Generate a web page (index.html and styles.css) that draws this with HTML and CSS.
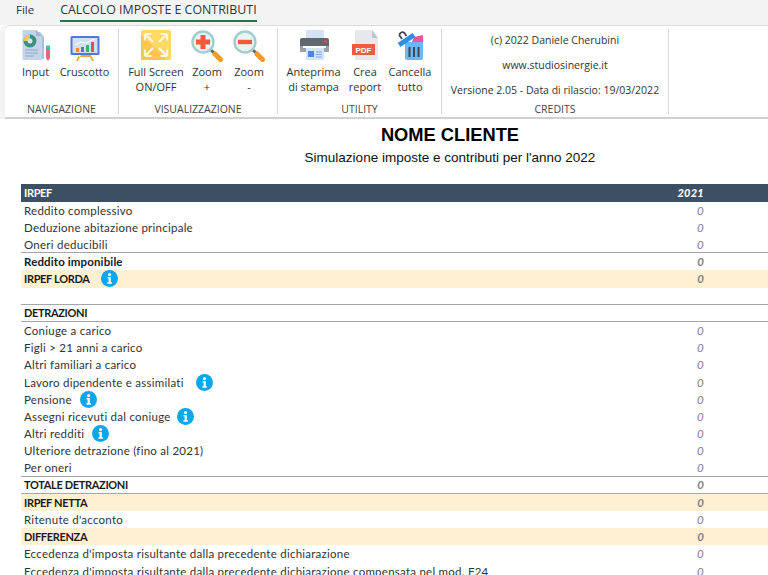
FILE: index.html
```html
<!DOCTYPE html>
<html lang="it">
<head>
<meta charset="utf-8">
<title>Calcolo imposte e contributi</title>
<link rel="stylesheet" href="styles.css">
</head>
<body>
<svg class="defs" width="0" height="0" aria-hidden="true">
  <symbol id="info" viewBox="0 0 17 17">
    <circle cx="8.5" cy="8.5" r="8.5" fill="#0ba6ee"/>
    <circle cx="8.5" cy="4.6" r="1.6" fill="#fff"/>
    <path d="M6.600 7h3.200v5.200h1.100v1.600H6.400v-1.600h1.200V8.600h-1z" fill="#fff"/>
  </symbol>
  <symbol id="lens" viewBox="0 0 32 32">
    <path d="M20 20l4 4" stroke="#5c6670" stroke-width="3"/>
    <path d="M24 24l5.500 5.500" stroke="#f39a2b" stroke-width="5" stroke-linecap="round"/>
    <circle cx="12" cy="12" r="10.500" fill="#e8f3f3" stroke="#a5cdd0" stroke-width="2.500"/>
  </symbol>
</svg>

<nav class="tabs">
  <span class="tab tab-file">File</span>
  <span class="tab tab-active">CALCOLO IMPOSTE E CONTRIBUTI</span>
</nav>

<section class="ribbon">
  <div class="group group-nav">
    <div class="buttons">
      <div class="btn btn-input">
        <svg class="icon" viewBox="0 0 30 32" width="30" height="32">
          <path d="M4 2h15l4 5v22H4z" fill="#aebfdc"/>
          <path d="M1.500 0H15l6 6v24H1.500z" fill="#c6d4ea"/>
          <path d="M15 0l6 6h-6z" fill="#a3b5d4"/>
          <circle cx="9" cy="11" r="6.500" fill="#3e8e80"/>
          <path d="M9 11V4.500A6.500 6.500 0 0 0 2.500 11z" fill="#f0c860"/>
          <circle cx="9" cy="11" r="2.500" fill="#d8e4ec"/>
          <path d="M4 20h13M4 23h13M4 26h9" stroke="#93a6c6" stroke-width="1"/>
          <path d="M25 19h4v9l-2 3-2-3z" fill="#e5697e"/>
          <path d="M25 15.500h4V19h-4z" fill="#47bdb9"/>
        </svg>
        <span>Input</span>
      </div>
      <div class="btn btn-crus">
        <svg class="icon" viewBox="0 0 30 32" width="30" height="32">
          <path d="M9 25h12v2H9zM9 25l-3 6h2l3-6zM21 25l3 6h-2l-3-6z" fill="#eda93a"/>
          <rect x="0.500" y="6" width="29" height="19" rx="1.500" fill="#4f78dc"/>
          <rect x="2.500" y="8" width="25" height="15" fill="#cfe0f2"/>
          <path d="M5 15l6-3 5 1 8-4" stroke="#fff" fill="none"/>
          <path d="M6 18h3v4H6z" fill="#ee8a3c"/>
          <path d="M11 17h3v5h-3z" fill="#4f78dc"/>
          <path d="M16 15h3v7h-3z" fill="#3fb06b"/>
          <path d="M21 12h3v10h-3z" fill="#e2504a"/>
        </svg>
        <span>Cruscotto</span>
      </div>
    </div>
    <div class="group-label">NAVIGAZIONE</div>
  </div>

  <div class="group group-view">
    <div class="buttons">
      <div class="btn btn-full">
        <svg class="icon" viewBox="0 0 30 32" width="30" height="32">
          <rect x="0" y="0" width="30" height="30" rx="1.500" fill="#ffd966"/>
          <path d="M0 30V4l26 26z" fill="#fdc550"/>
          <path d="M4 4l8 8M4 4h6.500M4 4v6.500M26 4l-8 8M26 4h-6.500M26 4v6.500M4 26l8-8M4 26h6.500M4 26v-6.500M26 26l-8-8M26 26h-6.500M26 26v-6.500" stroke="#fff6de" stroke-width="2.200" fill="none"/>
        </svg>
        <span>Full Screen<br>ON/OFF</span>
      </div>
      <div class="btn btn-zoomp">
        <svg class="icon" viewBox="0 0 32 32" width="32" height="32">
          <use href="#lens"/>
          <path d="M5 9.500h4.500V5h5v4.500H19v5h-4.500V19h-5v-4.500H5z" fill="#f4593b"/>
        </svg>
        <span>Zoom<br>+</span>
      </div>
      <div class="btn btn-zoomm">
        <svg class="icon" viewBox="0 0 32 32" width="32" height="32">
          <use href="#lens"/>
          <path d="M5 9.800h14v4.400H5z" fill="#f4593b"/>
        </svg>
        <span>Zoom<br>-</span>
      </div>
    </div>
    <div class="group-label">VISUALIZZAZIONE</div>
  </div>

  <div class="group group-util">
    <div class="buttons">
      <div class="btn btn-print">
        <svg class="icon" viewBox="0 0 32 32" width="32" height="32">
          <path d="M8 0h18v12H8z" fill="#d5e2f6"/>
          <path d="M2 10a2 2 0 0 1 2-2h25a2 2 0 0 1 2 2v6H2z" fill="#5f676f"/>
          <path d="M2 16h29v6H2z" fill="#9aa1a9"/>
          <path d="M5 16h23v2H5z" fill="#fff"/>
          <path d="M8 18h18v12H8z" fill="#d5e5f8"/>
          <path d="M10 21h6v6h-6z" fill="#4e86dc"/>
          <path d="M18 22h6M18 24.500h6M18 27h6" stroke="#7ea6e4" stroke-width="1"/>
          <rect x="26" y="10.500" width="3" height="2" fill="#e2504a"/>
        </svg>
        <span>Anteprima<br>di stampa</span>
      </div>
      <div class="btn btn-pdf">
        <svg class="icon" viewBox="0 0 32 32" width="32" height="32">
          <path d="M6 0h17l6 8v22H6z" fill="#e6e8ec"/>
          <path d="M23 0l6 8h-6z" fill="#bfc4cb"/>
          <rect x="3" y="14" width="23" height="11" rx="0.500" fill="#f25a48"/>
          <text x="14.500" y="22.700" class="pdf-text" text-anchor="middle">PDF</text>
        </svg>
        <span>Crea<br>report</span>
      </div>
      <div class="btn btn-trash">
        <svg class="icon" viewBox="0 0 32 32" width="32" height="32">
          <path d="M18 12l2-5 9-2v7z" fill="#f0568f"/>
          <path d="M11 12h18v16a2 2 0 0 1-2 2H13a2 2 0 0 1-2-2z" fill="#6cb8f5"/>
          <path d="M14.500 17h2v10h-2zM19 17h2v10h-2zM23.500 17h2v10h-2z" fill="#3c4652"/>
          <path d="M5 15L20 5" stroke="#2f8de4" stroke-width="5"/>
          <path d="M8 9L5.500 5.500a3 3 0 0 1 5-2.500l2 3" stroke="#3c4652" stroke-width="1.800" fill="none"/>
        </svg>
        <span>Cancella<br>tutto</span>
      </div>
    </div>
    <div class="group-label">UTILITY</div>
  </div>

  <div class="group group-credits">
    <div class="credits">
      <span>(c) 2022 Daniele Cherubini</span>
      <span>www.studiosinergie.it</span>
      <span>Versione 2.05 - Data di rilascio: 19/03/2022</span>
    </div>
    <div class="group-label">CREDITS</div>
  </div>
</section>

<main class="sheet">
  <h1 class="title">NOME CLIENTE</h1>
  <p class="subtitle">Simulazione imposte e contributi per l'anno 2022</p>

  <div class="table">
    <div class="row row-head"><span class="caps">IRPEF</span><b>2021</b></div>
    <div class="row"><span>Reddito complessivo</span><i>0</i></div>
    <div class="row"><span>Deduzione abitazione principale</span><i>0</i></div>
    <div class="row row-rule"><span>Oneri deducibili</span><i>0</i></div>
    <div class="row row-bold"><span>Reddito imponibile</span><i>0</i></div>
    <div class="row row-bold row-peach"><span class="caps">IRPEF LORDA</span><svg class="info gap-11" width="17" height="17"><use href="#info"/></svg><i>0</i></div>
    <div class="row row-rule"></div>
    <div class="row row-bold row-rule"><span class="caps">DETRAZIONI</span></div>
    <div class="row"><span>Coniuge a carico</span><i>0</i></div>
    <div class="row"><span>Figli &gt; 21 anni a carico</span><i>0</i></div>
    <div class="row"><span>Altri familiari a carico</span><i>0</i></div>
    <div class="row"><span>Lavoro dipendente e assimilati</span><svg class="info gap-12" width="17" height="17"><use href="#info"/></svg><i>0</i></div>
    <div class="row"><span>Pensione</span><svg class="info gap-8" width="17" height="17"><use href="#info"/></svg><i>0</i></div>
    <div class="row"><span>Assegni ricevuti dal coniuge</span><svg class="info gap-6" width="17" height="17"><use href="#info"/></svg><i>0</i></div>
    <div class="row"><span>Altri redditi</span><svg class="info gap-8" width="17" height="17"><use href="#info"/></svg><i>0</i></div>
    <div class="row"><span>Ulteriore detrazione (fino al 2021)</span><i>0</i></div>
    <div class="row row-rule"><span>Per oneri</span><i>0</i></div>
    <div class="row row-bold row-rule"><span class="caps">TOTALE DETRAZIONI</span><i>0</i></div>
    <div class="row row-bold row-peach"><span class="caps">IRPEF NETTA</span><i>0</i></div>
    <div class="row"><span>Ritenute d'acconto</span><i>0</i></div>
    <div class="row row-bold row-peach"><span class="caps">DIFFERENZA</span><i>0</i></div>
    <div class="row"><span>Eccedenza d'imposta risultante dalla precedente dichiarazione</span><i>0</i></div>
    <div class="row"><span>Eccedenza d'imposta risultante dalla precedente dichiarazione compensata nel mod. F24</span><i>0</i></div>
  </div>
</main>
</body>
</html>
```
FILE: styles.css
```css
* { box-sizing: border-box; }
html, body { margin: 0; height: 100%; overflow: hidden; background: #fff; }
body { width: 768px; height: 575px; font-family: "Open Sans", "Liberation Sans", sans-serif; color: #333; }
.defs { position: absolute; }

.tabs { height: 25px; background: #f3f3f3; display: flex; align-items: flex-start; padding: 2px 0 0 16px; gap: 26px; font-size: 12.4px; color: #333; }
.tab { line-height: 15px; padding-bottom: 3px; }
.tab-file { font-size: 11.5px; }
.tab-active { border-bottom: 2px solid #1f7a45; }

.ribbon { height: 94px; margin-left: 5px; background: #fff; border-radius: 6px 0 0 0; border-top: 1px solid #dcdcdc; border-bottom: 2px solid #d0d0d0; display: flex; padding-top: 3px; box-shadow: -5px 0 0 #f3f3f3; }
.group { display: flex; flex-direction: column; border-right: 1px solid #d8d8d8; height: 85px; }
.group-nav { width: 114px; }
.group-view { width: 159px; }
.group-util { width: 164px; }
.group-credits { width: 227px; }
.buttons { flex: 1; display: flex; padding-top: 1px; }
.btn { display: flex; flex-direction: column; align-items: center; text-align: center; font-size: 11px; line-height: 15px; color: #333; }
.btn .icon { height: 32px; margin-bottom: 2px; flex: none; }
.btn-input { width: 49px; margin-left: 6px; }
.btn-crus { width: 49px; }
.btn-full { width: 72px; margin-left: 1px; }
.btn-zoomp { width: 30px; }
.btn-zoomm { width: 30px; margin-left: 12px; }
.btn-print { width: 71px; }
.btn-pdf { width: 32px; }
.btn-trash { width: 58px; }
.group-label { height: 10px; line-height: 10px; text-align: center; font-size: 10.5px; color: #444; }
.credits { flex: 1; display: flex; flex-direction: column; align-items: center; justify-content: space-between; font-size: 10.5px; line-height: 15px; padding: 4px 0 6px; color: #333; }
.pdf-text { font: bold 8px "Liberation Sans", sans-serif; fill: #fff; }

.sheet { width: 768px; padding-left: 21px; font-family: Lato, "Liberation Sans", sans-serif; }
.title { margin: 4px 0 0; padding-left: 111px; height: 24px; font: bold 18.3px/24px "Liberation Sans", sans-serif; color: #000; text-align: center; }
.subtitle { margin: 0; padding: 2px 0 0 111px; height: 22px; font: 13.5px/18px "Liberation Sans", sans-serif; color: #111; text-align: center; }
.table { margin-top: 15.4px; }
.row { display: flex; align-items: center; height: 17.2px; padding: 0 64px 0 3px; font-size: 11.5px; color: #333; letter-spacing: 0.25px; white-space: nowrap; }
.row span { flex: none; }
.row i { margin-left: auto; color: #7f7f7f; font-style: italic; }
.row b { margin-left: auto; font-style: italic; font-size: 11px; color: #fff; }
.caps { font-size: 11px; letter-spacing: -0.34px; }
.row-head { background: #3d4f63; color: #fff; font-weight: 700; }
.row-bold { font-weight: 700; color: #1a1a1a; letter-spacing: 0.13px; }
.row-peach { background: #fff0d2; }
.row-rule { border-bottom: 1px solid #a6a6a6; }
.info { flex: none; }
.gap-6 { margin-left: 6px; }
.gap-8 { margin-left: 8px; }
.gap-11 { margin-left: 11px; }
.gap-12 { margin-left: 12px; }
```
